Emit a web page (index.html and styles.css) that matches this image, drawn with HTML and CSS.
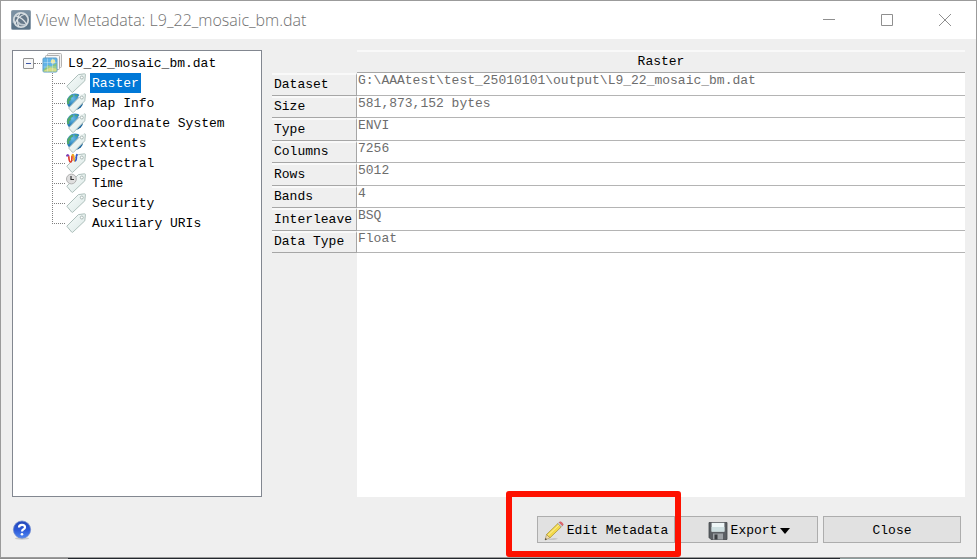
FILE: index.html
```
<!DOCTYPE html>
<html lang="en">
<head>
    <meta charset="UTF-8">
    <meta name="viewport" content="width=device-width, initial-scale=1.0">
    <title>View Metadata: L9_22_mosaic_bm.dat</title>
    <link rel="stylesheet" href="styles.css">
</head>
<body>
    <!-- Shared icon shapes -->
    <svg class="icon-defs" width="0" height="0" aria-hidden="true">
        <defs>
            <linearGradient id="tag-fill" x1="0" y1="0" x2="1" y2="1">
                <stop offset="0" stop-color="#f8fcfc"/>
                <stop offset="1" stop-color="#dce9e6"/>
            </linearGradient>
            <radialGradient id="globe-fill" cx="0.35" cy="0.3" r="0.8">
                <stop offset="0" stop-color="#6cbce4"/>
                <stop offset="0.5" stop-color="#2b82bd"/>
                <stop offset="1" stop-color="#135a92"/>
            </radialGradient>
            <symbol id="tag" viewBox="0 0 20 20">
                <path d="M0.8 13.2 L12.4 1.6 L18.6 0.8 Q19.5 0.8 19.4 1.8 L18.8 7.8 L6.6 19.4 Q6 19.6 5.6 19 Z" fill="url(#tag-fill)" stroke="#adbfbb" stroke-width="1" stroke-linejoin="round"/>
                <circle cx="15.8" cy="4.5" r="1.5" fill="#fff" stroke="#a0b0ad" stroke-width="0.9"/>
            </symbol>
            <symbol id="globe-tag" viewBox="0 0 20 20">
                <circle cx="9" cy="8.8" r="8.2" fill="url(#globe-fill)"/>
                <path d="M1.6 6 Q3.4 2.4 6.6 1.4 L7 3.4 L4.6 5 L5 7 L3 8.4 L3.4 11 L1.2 11 Q0.4 8.4 1.6 6 Z" fill="#52a868"/>
                <path d="M8.5 1.4 L12 2 L10 3.8 Z" fill="#52a868"/>
                <path d="M2.6 15 L14 3.4 L18.6 0.8 Q19.5 0.8 19.4 1.8 L18.8 7.8 L7.4 19.4 Q6.6 19.6 6.2 19 Z" fill="url(#tag-fill)" stroke="#adbfbb" stroke-width="1" stroke-linejoin="round"/>
                <path d="M11.6 4.6 L13.6 1.4 L18.6 0.8 L15 4 Z" fill="#f0f6f5"/>
                <circle cx="15.8" cy="4.5" r="1.5" fill="#fff" stroke="#a0b0ad" stroke-width="0.9"/>
            </symbol>
        </defs>
    </svg>

    <div class="window">
        <header class="title-bar">
            <svg class="app-icon" viewBox="0 0 20 20" aria-hidden="true">
                <rect x="0.5" y="0.5" width="19" height="19" rx="1" fill="#7a90a2" stroke="#8b9cab"/>
                <path d="M1 13 L19 6 V19 H1 Z" fill="#5a7387"/>
                <circle cx="10" cy="10" r="7.2" fill="#66798a" stroke="#d3dade" stroke-width="1.8"/>
                <path d="M4 13.5 Q7 6 14.5 4 M5 5.8 Q12 7.5 15.6 14.5 M8 17 Q4.5 10 9 3" fill="none" stroke="#dce2e6" stroke-width="1.2"/>
                <path d="M7 12 Q9 15.5 14.5 14.8" fill="none" stroke="#c1cbd2" stroke-width="1.6"/>
            </svg>
            <h1 class="title">View Metadata: L9_22_mosaic_bm.dat</h1>
            <div class="window-controls">
                <button type="button" aria-label="Minimize">
                    <svg viewBox="0 0 12 12"><path d="M0 5.5 H12"/></svg>
                </button>
                <button type="button" aria-label="Maximize">
                    <svg viewBox="0 0 12 12"><path d="M0.5 0.5 H11.5 V11.5 H0.5 Z"/></svg>
                </button>
                <button type="button" aria-label="Close window">
                    <svg viewBox="0 0 12 12"><path d="M0 0 L12 12 M12 0 L0 12"/></svg>
                </button>
            </div>
        </header>

        <main class="content">
            <nav class="tree">
                <div class="tree-root">
                    <button type="button" class="expander" aria-label="Collapse">
                        <svg viewBox="0 0 9 9"><path d="M2 4.5 H7" stroke="#3c56a8"/></svg>
                    </button>
                    <span class="root-line"></span>
                    <svg class="icon" viewBox="0 0 20 20" aria-hidden="true">
                        <rect x="5.5" y="0.5" width="14" height="14" rx="1" fill="#f2f2f2" stroke="#b3b3b3"/>
                        <rect x="3.5" y="2.5" width="14" height="14" rx="1" fill="#f7f7f7" stroke="#adadad"/>
                        <rect x="1" y="5" width="14" height="14" rx="1" fill="#62b4e8" stroke="#5b9cc9"/>
                        <path d="M1.5 17 L6 12 L9 13.5 L14.5 10 V18.5 H1.5 Z" fill="#8cc47c"/>
                        <path d="M1.5 18 L8 14.5 L14.5 15.5 V18.5 H1.5 Z" fill="#d6dc86"/>
                        <circle cx="11" cy="8.5" r="2.2" fill="#f0e898"/>
                        <path d="M5.5 5.5 V18.5 M10.5 5.5 V18.5 M1.5 9.5 H14.5 M1.5 14 H14.5" stroke="#dceef8" stroke-width="0.4"/>
                    </svg>
                    <a href="#" class="tree-label">L9_22_mosaic_bm.dat</a>
                </div>
                <ul class="tree-list">
                    <li>
                        <span class="branch"></span>
                        <svg class="icon" aria-hidden="true"><use href="#tag"/></svg>
                        <a href="#" class="tree-label selected">Raster</a>
                    </li>
                    <li>
                        <span class="branch"></span>
                        <svg class="icon" aria-hidden="true"><use href="#globe-tag"/></svg>
                        <a href="#" class="tree-label">Map Info</a>
                    </li>
                    <li>
                        <span class="branch"></span>
                        <svg class="icon" aria-hidden="true"><use href="#globe-tag"/></svg>
                        <a href="#" class="tree-label">Coordinate System</a>
                    </li>
                    <li>
                        <span class="branch"></span>
                        <svg class="icon" aria-hidden="true"><use href="#globe-tag"/></svg>
                        <a href="#" class="tree-label">Extents</a>
                    </li>
                    <li>
                        <span class="branch"></span>
                        <svg class="icon" viewBox="0 0 20 20" aria-hidden="true">
                            <use href="#tag" width="20" height="20"/>
                            <g fill="none" stroke-width="1.7">
                                <path d="M0.6 3.4 Q1.6 0.2 2.8 3.4" stroke="#7d3fb4"/>
                                <path d="M2.8 3.2 Q3 9 4.6 9 Q6 9 6 3" stroke="#e33b2b"/>
                                <path d="M6 3.2 Q6.8 0.2 7.8 3.2 Q7.8 8 9 8" stroke="#f1a51f"/>
                                <path d="M8.8 8 Q10.4 8 10.4 3 L11.2 1" stroke="#3557c9"/>
                            </g>
                        </svg>
                        <a href="#" class="tree-label">Spectral</a>
                    </li>
                    <li>
                        <span class="branch"></span>
                        <svg class="icon" viewBox="0 0 20 20" aria-hidden="true">
                            <use href="#tag" width="20" height="20"/>
                            <circle cx="5.4" cy="6" r="4.9" fill="#dedede" stroke="#b0b0b0" stroke-width="1"/>
                            <path d="M5 3 V6.5 H8" fill="none" stroke="#333" stroke-width="1.2"/>
                        </svg>
                        <a href="#" class="tree-label">Time</a>
                    </li>
                    <li>
                        <span class="branch"></span>
                        <svg class="icon" aria-hidden="true"><use href="#tag"/></svg>
                        <a href="#" class="tree-label">Security</a>
                    </li>
                    <li>
                        <span class="branch"></span>
                        <svg class="icon" aria-hidden="true"><use href="#tag"/></svg>
                        <a href="#" class="tree-label">Auxiliary URIs</a>
                    </li>
                </ul>
            </nav>

            <section class="details">
                <table class="metadata">
                    <thead>
                        <tr><td class="corner"></td><th scope="col">Raster</th></tr>
                    </thead>
                    <tbody>
                        <tr><th scope="row">Dataset</th><td>G:\AAAtest\test_25010101\output\L9_22_mosaic_bm.dat</td></tr>
                        <tr><th scope="row">Size</th><td>581,873,152 bytes</td></tr>
                        <tr><th scope="row">Type</th><td>ENVI</td></tr>
                        <tr><th scope="row">Columns</th><td>7256</td></tr>
                        <tr><th scope="row">Rows</th><td>5012</td></tr>
                        <tr><th scope="row">Bands</th><td>4</td></tr>
                        <tr><th scope="row">Interleave</th><td>BSQ</td></tr>
                        <tr><th scope="row">Data Type</th><td>Float</td></tr>
                    </tbody>
                </table>
                <div class="filler"></div>
            </section>
        </main>

        <footer class="footer">
            <button type="button" class="help" aria-label="Help">
                <svg viewBox="0 0 20 20">
                    <defs>
                        <linearGradient id="help-fill" x1="0" y1="0" x2="0" y2="1">
                            <stop offset="0" stop-color="#2347b8"/>
                            <stop offset="0.5" stop-color="#2c58d6"/>
                            <stop offset="1" stop-color="#4f86f2"/>
                        </linearGradient>
                    </defs>
                    <ellipse cx="10" cy="18.4" rx="7" ry="1.3" fill="#c9c9c9"/>
                    <circle cx="10" cy="9.6" r="8.6" fill="url(#help-fill)" stroke="#6d89cf" stroke-width="0.8"/>
                    <path d="M7 7.4 Q7 4.8 10 4.8 Q13 4.8 13 7.2 Q13 8.8 11.2 9.6 Q10 10.2 10 11.6" fill="none" stroke="#fff" stroke-width="2.2"/>
                    <circle cx="10" cy="14.3" r="1.3" fill="#fff"/>
                </svg>
            </button>
            <div class="actions">
                <div class="marked">
                    <button type="button" class="action">
                        <svg class="icon" viewBox="0 0 20 20" aria-hidden="true">
                            <path d="M3 19 Q9 16 14 17.5 Q12 19.4 3 19 Z" fill="#c4c4c4"/>
                            <path d="M1 19 L2.6 13.4 L6 16.8 Z" fill="#f0d9ac" stroke="#8f7a45" stroke-width="0.5"/>
                            <path d="M1 19 L1.6 16.9 L3 18.3 Z" fill="#333"/>
                            <path d="M2.6 13.4 L13.8 2.6 L17.2 6 L6 16.8 Z" fill="#f3d94a" stroke="#a28c2c" stroke-width="0.7"/>
                            <path d="M4 14.4 L15 3.8" stroke="#fbf1a4" stroke-width="1"/>
                            <path d="M13.8 2.6 L15.2 1.3 L18.6 4.7 L17.2 6 Z" fill="#c8ccd0" stroke="#999" stroke-width="0.4"/>
                            <path d="M15.2 1.3 Q16.4 0.3 17.8 1.4 Q20.2 3.4 18.6 4.7 Z" fill="#e8656b" stroke="#c2474e" stroke-width="0.5"/>
                        </svg>
                        Edit Metadata
                    </button>
                    <span class="highlight"></span>
                </div>
                <button type="button" class="action">
                    <svg class="icon" viewBox="0 0 20 20" aria-hidden="true">
                        <path d="M1 1.5 H19 V18.5 H3 L1 16.5 Z" fill="#5b5f64" stroke="#43464a" stroke-width="0.8"/>
                        <rect x="3.6" y="1.8" width="12.8" height="8.8" fill="#eef6f7"/>
                        <rect x="3.6" y="6" width="12.8" height="4.6" fill="#cfe0e2"/>
                        <rect x="5" y="12.5" width="10" height="6" fill="#9da1a5"/>
                        <rect x="6.5" y="13.5" width="3" height="5" fill="#3b3e42"/>
                    </svg>
                    Export
                    <svg class="caret" viewBox="0 0 10 6" aria-hidden="true"><path d="M0 0 H10 L5 6 Z"/></svg>
                </button>
                <button type="button" class="action">Close</button>
            </div>
        </footer>
    </div>
</body>
</html>
```

FILE: styles.css
```
* {
    box-sizing: border-box;
    margin: 0;
    padding: 0;
}

body {
    height: 100vh;
    padding-bottom: 1px;
    background: linear-gradient(90deg, #8c8c8c 7%, #22272d 7%, #22272d 86%, #8c9c9c 86%);
    font-family: "Liberation Mono", "DejaVu Sans Mono", monospace;
    font-size: 13px;
    line-height: 20px;
    color: #000;
}

button {
    border: none;
    background: none;
    font: inherit;
    color: inherit;
}

.icon-defs {
    position: absolute;
}

.window {
    height: 100%;
    display: flex;
    flex-direction: column;
    border: 1px solid #9b9b9b;
    background-color: #efefef;
}

/* Title bar */
.title-bar {
    display: flex;
    align-items: center;
    height: 38px;
    padding: 0 2px 0 10px;
    background-color: #fff;
}

.app-icon {
    width: 20px;
    height: 20px;
}

.title {
    flex: 1;
    margin-left: 5px;
    font-family: "Open Sans", "Noto Sans", sans-serif;
    font-size: 16px;
    font-weight: 300;
    color: #707070;
}

.window-controls {
    display: flex;
    height: 100%;
}

.window-controls button {
    display: flex;
    align-items: center;
    justify-content: center;
    width: 58px;
}

.window-controls svg {
    width: 12px;
    height: 12px;
    fill: none;
    stroke: #8f8f8f;
}

/* Main area */
.content {
    flex: 1;
    display: flex;
    gap: 10px;
    padding: 11px 11px 0;
}

.tree {
    width: 250px;
    padding: 2px 10px;
    border: 1px solid #828790;
    background-color: #fff;
}

.tree-root,
.tree-list li {
    display: flex;
    align-items: center;
    height: 20px;
}

.tree-list {
    padding-left: 29px;
    list-style: none;
}

.expander {
    display: flex;
    width: 11px;
    height: 11px;
    border: 1px solid #919191;
    border-radius: 1px;
    background-color: #f7f7f7;
}

.expander svg {
    width: 9px;
    height: 9px;
}

.root-line {
    width: 8px;
    border-top: 1px dotted #808080;
}

.icon {
    flex: none;
    width: 20px;
    height: 20px;
}

.branch {
    width: 14px;
    height: 20px;
    background:
        repeating-linear-gradient(180deg, #808080 0 1px, transparent 1px 2px) 0 0 / 1px 100% no-repeat,
        repeating-linear-gradient(90deg, #808080 0 1px, transparent 1px 2px) 0 10px / 100% 1px no-repeat;
}

.tree-list li:last-child .branch {
    background-size: 1px 10px, 100% 1px;
}

.tree-label {
    height: 20px;
    margin-left: 4px;
    padding: 1px 2px 0;
    color: #000;
    text-decoration: none;
    white-space: nowrap;
}

.tree-label.selected {
    background-color: #0078d7;
    color: #fff;
}

/* Metadata table */
.details {
    flex: 1;
    display: flex;
    flex-direction: column;
}

.metadata {
    width: 100%;
    height: 203px;
    border-collapse: separate;
    border-spacing: 0;
    table-layout: fixed;
}

.metadata th {
    border-top: 2px solid #f9f9f9;
    border-bottom: 1px solid #a6a6a6;
    background-color: #efefef;
    font-weight: 400;
}

.metadata tbody th {
    padding-left: 2px;
    border-right: 1px solid #a6a6a6;
    line-height: 18px;
    text-align: left;
}

.metadata td {
    padding-left: 1px;
    border-bottom: 1px solid #b4b4b4;
    background-color: #fff;
    line-height: 16px;
    vertical-align: top;
    color: #6d6d6d;
}

.metadata .corner {
    width: 85px;
    border: none;
    background: none;
}

.filler {
    flex: 1;
    margin-left: 85px;
    background-color: #fff;
}

/* Footer */
.footer {
    display: flex;
    align-items: center;
    justify-content: space-between;
    height: 60px;
    padding: 5px 15px 0 11px;
}

.help {
    display: flex;
}

.help svg {
    width: 20px;
    height: 20px;
}

.actions {
    display: flex;
    gap: 5px;
}

.action {
    display: flex;
    align-items: center;
    justify-content: center;
    gap: 3px;
    width: 138px;
    height: 27px;
    padding-top: 2px;
    border: 1px solid #adadad;
    background-color: #e1e1e1;
    white-space: nowrap;
}

.caret {
    width: 10px;
    height: 6px;
}

.marked {
    position: relative;
}

/* Red frame around the edit button */
.highlight {
    position: absolute;
    inset: -25px -6px -14px -31px;
    border: 6px solid #fe1100;
    border-radius: 3px;
    pointer-events: none;
}
```
